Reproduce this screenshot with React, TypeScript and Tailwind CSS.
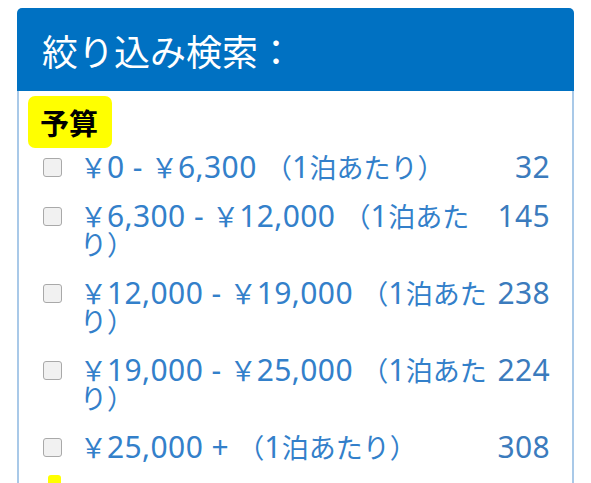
import React from "react";

const LATIN = { fontFamily: '"Noto Sans", "Open Sans", sans-serif' };
const JP = { fontFamily: '"Noto Sans CJK JP", sans-serif' };

type Row = { lines: string[]; count: string };

const rows: Row[] = [
  { lines: ["￥0 - ￥6,300 （1泊あたり）"], count: "32" },
  { lines: ["￥6,300 - ￥12,000 （1泊あた", "り）"], count: "145" },
  { lines: ["￥12,000 - ￥19,000 （1泊あた", "り）"], count: "238" },
  { lines: ["￥19,000 - ￥25,000 （1泊あた", "り）"], count: "224" },
  { lines: ["￥25,000 + （1泊あたり）"], count: "308" },
];

const isWide = (ch: string) => ch.charCodeAt(0) > 0x2000;

function runs(s: string) {
  const out: { wide: boolean; text: string }[] = [];
  for (const ch of s) {
    const w = isWide(ch);
    const last = out[out.length - 1];
    if (last && last.wide === w) last.text += ch;
    else out.push({ wide: w, text: ch });
  }
  return out;
}

function Line({ text }: { text: string }) {
  return (
    <div className="whitespace-pre leading-[28px] h-[28px] overflow-visible">
      {runs(text).map((r, i) =>
        r.wide ? (
          <span key={i} className="text-[27px] leading-[28px]" style={JP}>
            {r.text}
          </span>
        ) : (
          <span key={i} className="text-[30px] leading-[28px] tracking-[0.4px]" style={LATIN}>
            {r.text}
          </span>
        )
      )}
    </div>
  );
}

export default function App() {
  return (
    <div className="w-[591px] h-[483px] overflow-hidden bg-white pl-[17px] pt-[8px]">
      <div className="w-[557px] h-[600px] rounded-t-[5px] overflow-hidden flex flex-col">
        <div
          className="h-[83px] shrink-0 bg-[#0071c2] flex items-center pl-[25px] text-white text-[36px] leading-none"
          style={JP}
        >
          絞り込み検索：
        </div>
        <div className="flex-1 border-x-2 border-[#a9c9e8] pt-[5px]">
          <div
            className="ml-[9px] inline-block bg-[#ffff00] rounded-[7px] pl-[12px] pr-[14px] py-[11px] text-[29px] leading-[30px] font-bold text-black"
            style={JP}
          >
            予算
          </div>
          <div className="mt-[5px] pl-[24px] pr-[22px] flex flex-col gap-[21px]">
            {rows.map((r, i) => (
              <div key={i} className="flex items-start">
                <div className="w-[19px] h-[19px] mt-[5px] shrink-0 rounded-[3px] border border-[#a9a9a9] bg-[#f1f1f1]" />
                <div className="flex-1 ml-[18px] text-[#3380ca]">
                  {r.lines.map((l, j) => (
                    <Line key={j} text={l} />
                  ))}
                </div>
                <div
                  className="shrink-0 text-right text-[#3b7bbd] text-[30px] leading-[28px] tracking-[0.3px]"
                  style={LATIN}
                >
                  {r.count}
                </div>
              </div>
            ))}
          </div>
          <div className="ml-[29px] mt-[14px] w-[13px] h-[20px] bg-[#ffff00] rounded-[3px]" />
        </div>
      </div>
    </div>
  );
}
